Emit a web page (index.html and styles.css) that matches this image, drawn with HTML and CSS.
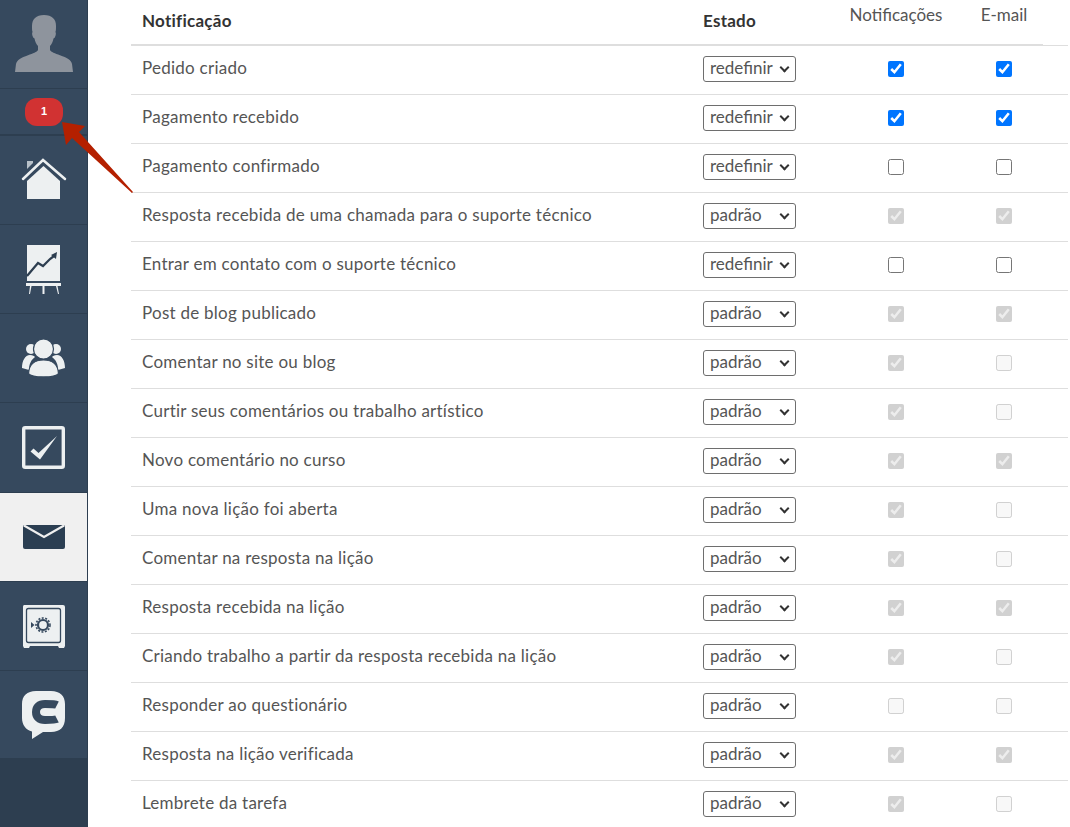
FILE: index.html
```html
<!DOCTYPE html>
<html lang="pt">
<head>
<meta charset="utf-8">
<title>Notificações</title>
<link rel="stylesheet" href="styles.css">
</head>
<body>
<div class="page">
<nav class="sidebar">
  <div class="nav-item avatar">
    <svg width="58" height="57" viewBox="0 0 58 57"><path fill="#8e949d" d="M29 0c-8 0-12 4-12 11 0 3 0 5 .6 6-.8.5-.6 3 .4 5 .5 1 1 1.400 1.500 1.500.6 3 1.800 5.500 3.500 7.500v4c-1 2-5 3.400-10 5.200C6 42.800 2 44.500 1 49l-1 8h58l-1-8c-1-4.500-5-6.200-12-8.800-5-1.800-9-3.200-10-5.200v-4c1.700-2 2.900-4.500 3.500-7.500.5-.1 1-.5 1.500-1.500 1-2 1.200-4.500.4-5 .6-1 .6-3 .6-6C41 4 37 0 29 0z"/></svg>
  </div>
  <div class="nav-item badge-item"><span class="badge">1</span></div>
  <div class="nav-item">
    <svg width="46" height="44" viewBox="0 0 46 44"><path fill="#edf0f1" d="M22.500 8 6 23v18h33V23z"/><path fill="none" stroke="#edf0f1" stroke-width="2.500" stroke-linecap="round" d="M2 21 22 2l22 19"/><path fill="#b8c1c9" d="M6 3h6v2l-6 6z"/></svg>
  </div>
  <div class="nav-item">
    <svg width="35" height="49" viewBox="0 0 35 49"><path fill="#edf0f1" d="M1 0h33v36H1z"/><path fill="#edf0f1" d="M0 38h35v3H0zM4 41h1.500L4 49H3zM16.500 41h2v8h-2zM30 41h1.500l1.500 8h-1z"/><path fill="none" stroke="#2d3e50" stroke-width="2.200" d="M1 31l11-13 5 3 7-7 4-3"/><path fill="#2d3e50" d="M31 7l-1 7-5-4z"/></svg>
  </div>
  <div class="nav-item">
    <svg width="44" height="38" viewBox="0 0 44 38"><g fill="#edf0f1"><circle cx="9" cy="10" r="5"/><circle cx="34" cy="10" r="5"/><path d="M0 29c0-7 3-13 8-13 3 0 4 1 5 2-4 3-6 7-6 13l-7-2zM43 29c0-7-3-13-8-13-3 0-4 1-5 2 4 3 6 7 6 13l7-2z"/></g><circle cx="21.500" cy="10" r="10" fill="#edf0f1" stroke="#36495e" stroke-width="1.200"/><path fill="#edf0f1" stroke="#36495e" stroke-width="1.200" d="M21.500 21c-9 0-14.500 5-15 13.500 3 4.500 27 4.500 30 0-.5-8.500-6-13.500-15-13.500z"/></svg>
  </div>
  <div class="nav-item check-item">
    <svg width="44" height="44" viewBox="0 0 44 44"><rect x="1.700" y="1.700" width="39.600" height="39.600" rx="1.500" fill="none" stroke="#edf0f1" stroke-width="3.400"/><path fill="#edf0f1" d="M8.500 25.500l3-3 5 4.500L35 10 18 33.500z"/></svg>
  </div>
  <div class="nav-item active">
    <svg width="42" height="24" viewBox="0 0 42 24"><rect width="42" height="24" rx="2" fill="#2b3e52"/><path fill="none" stroke="#f0f0f0" stroke-width="2.200" d="M1 .5 21 12 41 .5"/></svg>
  </div>
  <div class="nav-item">
    <svg width="44" height="43" viewBox="0 0 44 43"><path fill="#edf0f1" d="M2 0h39a2 2 0 0 1 2 2v39l-1 2h-5l-1-2H8l-1 2H2l-1-2V2a2 2 0 0 1 1-2z"/><rect x="4.500" y="3.500" width="34" height="34" rx="2" fill="none" stroke="#36495e" stroke-width="1.300"/><circle cx="21" cy="20" r="5" fill="none" stroke="#36495e" stroke-width="2.200"/><circle cx="21" cy="20" r="7" fill="none" stroke="#36495e" stroke-width="1.600" stroke-dasharray="2 1.500"/><path fill="#36495e" d="M9 17l3.500 3L9 23z"/></svg>
  </div>
  <div class="nav-item chat-item">
    <svg width="43" height="48" viewBox="0 0 43 48"><path fill="#edf0f1" d="M14 0h15c9 0 14 5 14 13v14c0 9-5 14-14 14H21L10 48V40.500C4 39 0 34 0 27V13C0 5 5 0 14 0z"/><path fill="none" stroke="#36495e" stroke-width="8" d="M35 14c-2-1-6-1-12-1-6 0-9 3-9 8s3 8 9 8c6 0 10 0 12-1"/></svg>
  </div>
  <div class="nav-rest"></div>
</nav>
<main class="content">
  <table class="table">
    <colgroup><col class="c-name"><col class="c-state"><col class="c-check"><col class="c-check2"></colgroup>
    <thead>
      <tr><th>Notificação</th><th>Estado</th><th class="light"><span>Notificações</span></th><th class="light last"><span>E-mail</span></th></tr>
    </thead>
    <tbody>
      <tr><td>Pedido criado</td><td><span class="sel"><select><option>redefinir</option><option>padrão</option></select></span></td><td><input type="checkbox" checked></td><td class="last"><input type="checkbox" checked></td></tr>
      <tr><td>Pagamento recebido</td><td><span class="sel"><select><option>redefinir</option><option>padrão</option></select></span></td><td><input type="checkbox" checked></td><td class="last"><input type="checkbox" checked></td></tr>
      <tr><td>Pagamento confirmado</td><td><span class="sel"><select><option>redefinir</option><option>padrão</option></select></span></td><td><input type="checkbox"></td><td class="last"><input type="checkbox"></td></tr>
      <tr><td>Resposta recebida de uma chamada para o suporte técnico</td><td><span class="sel"><select><option>padrão</option><option>redefinir</option></select></span></td><td><input type="checkbox" checked disabled></td><td class="last"><input type="checkbox" checked disabled></td></tr>
      <tr><td>Entrar em contato com o suporte técnico</td><td><span class="sel"><select><option>redefinir</option><option>padrão</option></select></span></td><td><input type="checkbox"></td><td class="last"><input type="checkbox"></td></tr>
      <tr><td>Post de blog publicado</td><td><span class="sel"><select><option>padrão</option><option>redefinir</option></select></span></td><td><input type="checkbox" checked disabled></td><td class="last"><input type="checkbox" checked disabled></td></tr>
      <tr><td>Comentar no site ou blog</td><td><span class="sel"><select><option>padrão</option><option>redefinir</option></select></span></td><td><input type="checkbox" checked disabled></td><td class="last"><input type="checkbox" disabled></td></tr>
      <tr><td>Curtir seus comentários ou trabalho artístico</td><td><span class="sel"><select><option>padrão</option><option>redefinir</option></select></span></td><td><input type="checkbox" checked disabled></td><td class="last"><input type="checkbox" disabled></td></tr>
      <tr><td>Novo comentário no curso</td><td><span class="sel"><select><option>padrão</option><option>redefinir</option></select></span></td><td><input type="checkbox" checked disabled></td><td class="last"><input type="checkbox" checked disabled></td></tr>
      <tr><td>Uma nova lição foi aberta</td><td><span class="sel"><select><option>padrão</option><option>redefinir</option></select></span></td><td><input type="checkbox" checked disabled></td><td class="last"><input type="checkbox" disabled></td></tr>
      <tr><td>Comentar na resposta na lição</td><td><span class="sel"><select><option>padrão</option><option>redefinir</option></select></span></td><td><input type="checkbox" checked disabled></td><td class="last"><input type="checkbox" disabled></td></tr>
      <tr><td>Resposta recebida na lição</td><td><span class="sel"><select><option>padrão</option><option>redefinir</option></select></span></td><td><input type="checkbox" checked disabled></td><td class="last"><input type="checkbox" checked disabled></td></tr>
      <tr><td>Criando trabalho a partir da resposta recebida na lição</td><td><span class="sel"><select><option>padrão</option><option>redefinir</option></select></span></td><td><input type="checkbox" checked disabled></td><td class="last"><input type="checkbox" disabled></td></tr>
      <tr><td>Responder ao questionário</td><td><span class="sel"><select><option>padrão</option><option>redefinir</option></select></span></td><td><input type="checkbox" disabled></td><td class="last"><input type="checkbox" disabled></td></tr>
      <tr><td>Resposta na lição verificada</td><td><span class="sel"><select><option>padrão</option><option>redefinir</option></select></span></td><td><input type="checkbox" checked disabled></td><td class="last"><input type="checkbox" checked disabled></td></tr>
      <tr><td>Lembrete da tarefa</td><td><span class="sel"><select><option>padrão</option><option>redefinir</option></select></span></td><td><input type="checkbox" checked disabled></td><td class="last"><input type="checkbox" disabled></td></tr>
    </tbody>
  </table>
</main>
<svg class="arrow" width="72" height="76" viewBox="0 0 72 76"><path fill="#b42000" d="M0 3l23 4-6 6 54 60-1 1-60-55-6 7z"/></svg>
</div>
</body>
</html>
```
FILE: styles.css
```css
html, body {
  margin: 0;
  height: 100%;
  overflow: hidden;
  background: #fff;
}
.page {
  position: relative;
  display: flex;
  height: 827px;
  font-family: "Lato", "Liberation Sans", sans-serif;
  color: #4a4a4a;
}
.sidebar {
  flex: 0 0 88px;
  width: 88px;
  display: flex;
  flex-direction: column;
  background: #2d3e50;
}
.nav-item {
  box-sizing: border-box;
  height: 89px;
  flex: none;
  display: flex;
  align-items: center;
  justify-content: center;
  background: #36495e;
  border-bottom: 1px solid #2d3e50;
  border-right: 1px solid #2d3e50;
}
.avatar {
  align-items: flex-end;
  padding-bottom: 16px;
}
.badge-item {
  height: 47px;
  border-bottom-width: 2px;
}
.badge {
  width: 38px;
  height: 28px;
  padding-left: 1px;
  box-sizing: border-box;
  border-radius: 12px;
  background: #d13232;
  color: #fff;
  font: bold 11px/27px "Liberation Sans", sans-serif;
  text-align: center;
}
.check-item {
  height: 90px;
}
.chat-item {
  height: 88px;
}
.active {
  background: #f0f0f0;
}
.nav-rest {
  flex: 1;
}
.content {
  flex: 1;
  min-width: 0;
  padding-left: 43px;
}
.table {
  border-collapse: collapse;
  table-layout: fixed;
  width: 937px;
  font-size: 17px;
  letter-spacing: .25px;
}
.c-name { width: 561px; }
.c-state { width: 150px; }
.c-check { width: 108px; }
.c-check2 { width: 118px; }
th {
  box-sizing: border-box;
  height: 45px;
  padding: 0 0 4px 11px;
  text-align: left;
  font-weight: 700;
  color: #333;
  border-bottom: 2px solid #dedede;
}
th.light {
  padding: 0;
  text-align: center;
  font-weight: 400;
  color: #555;
  vertical-align: top;
  line-height: 30px;
  letter-spacing: 0;
}
th.last {
  padding-right: 10px;
  border-bottom: 1px solid #dedede;
  background: linear-gradient(#dedede, #dedede) left bottom / 93px 1px no-repeat;
}
td {
  box-sizing: border-box;
  height: 49px;
  padding: 0 0 4px 11px;
  border-bottom: 1px solid #dedede;
  color: #555;
}
td:nth-child(n+2) {
  padding-left: 0;
  padding-bottom: 2px;
}
td:nth-child(2) {
  padding-left: 11px;
}
td.last {
  padding-right: 10px;
}
td input {
  display: block;
  width: 16px;
  height: 16px;
  margin: 0 auto;
}
.sel {
  position: relative;
  display: block;
  width: 93px;
}
.sel::after {
  content: "";
  position: absolute;
  right: 8px;
  top: 8px;
  width: 5px;
  height: 5px;
  border-right: 2px solid #333;
  border-bottom: 2px solid #333;
  transform: rotate(45deg);
  pointer-events: none;
}
td select {
  appearance: none;
  display: block;
  box-sizing: border-box;
  width: 93px;
  height: 26px;
  margin: 0;
  padding: 0 0 2px 6px;
  font: inherit;
  letter-spacing: 0;
  color: #555;
  background: #fff;
  border: 1px solid #6e6e6e;
  border-radius: 3px;
}
.arrow {
  position: absolute;
  left: 62px;
  top: 119px;
}
```
